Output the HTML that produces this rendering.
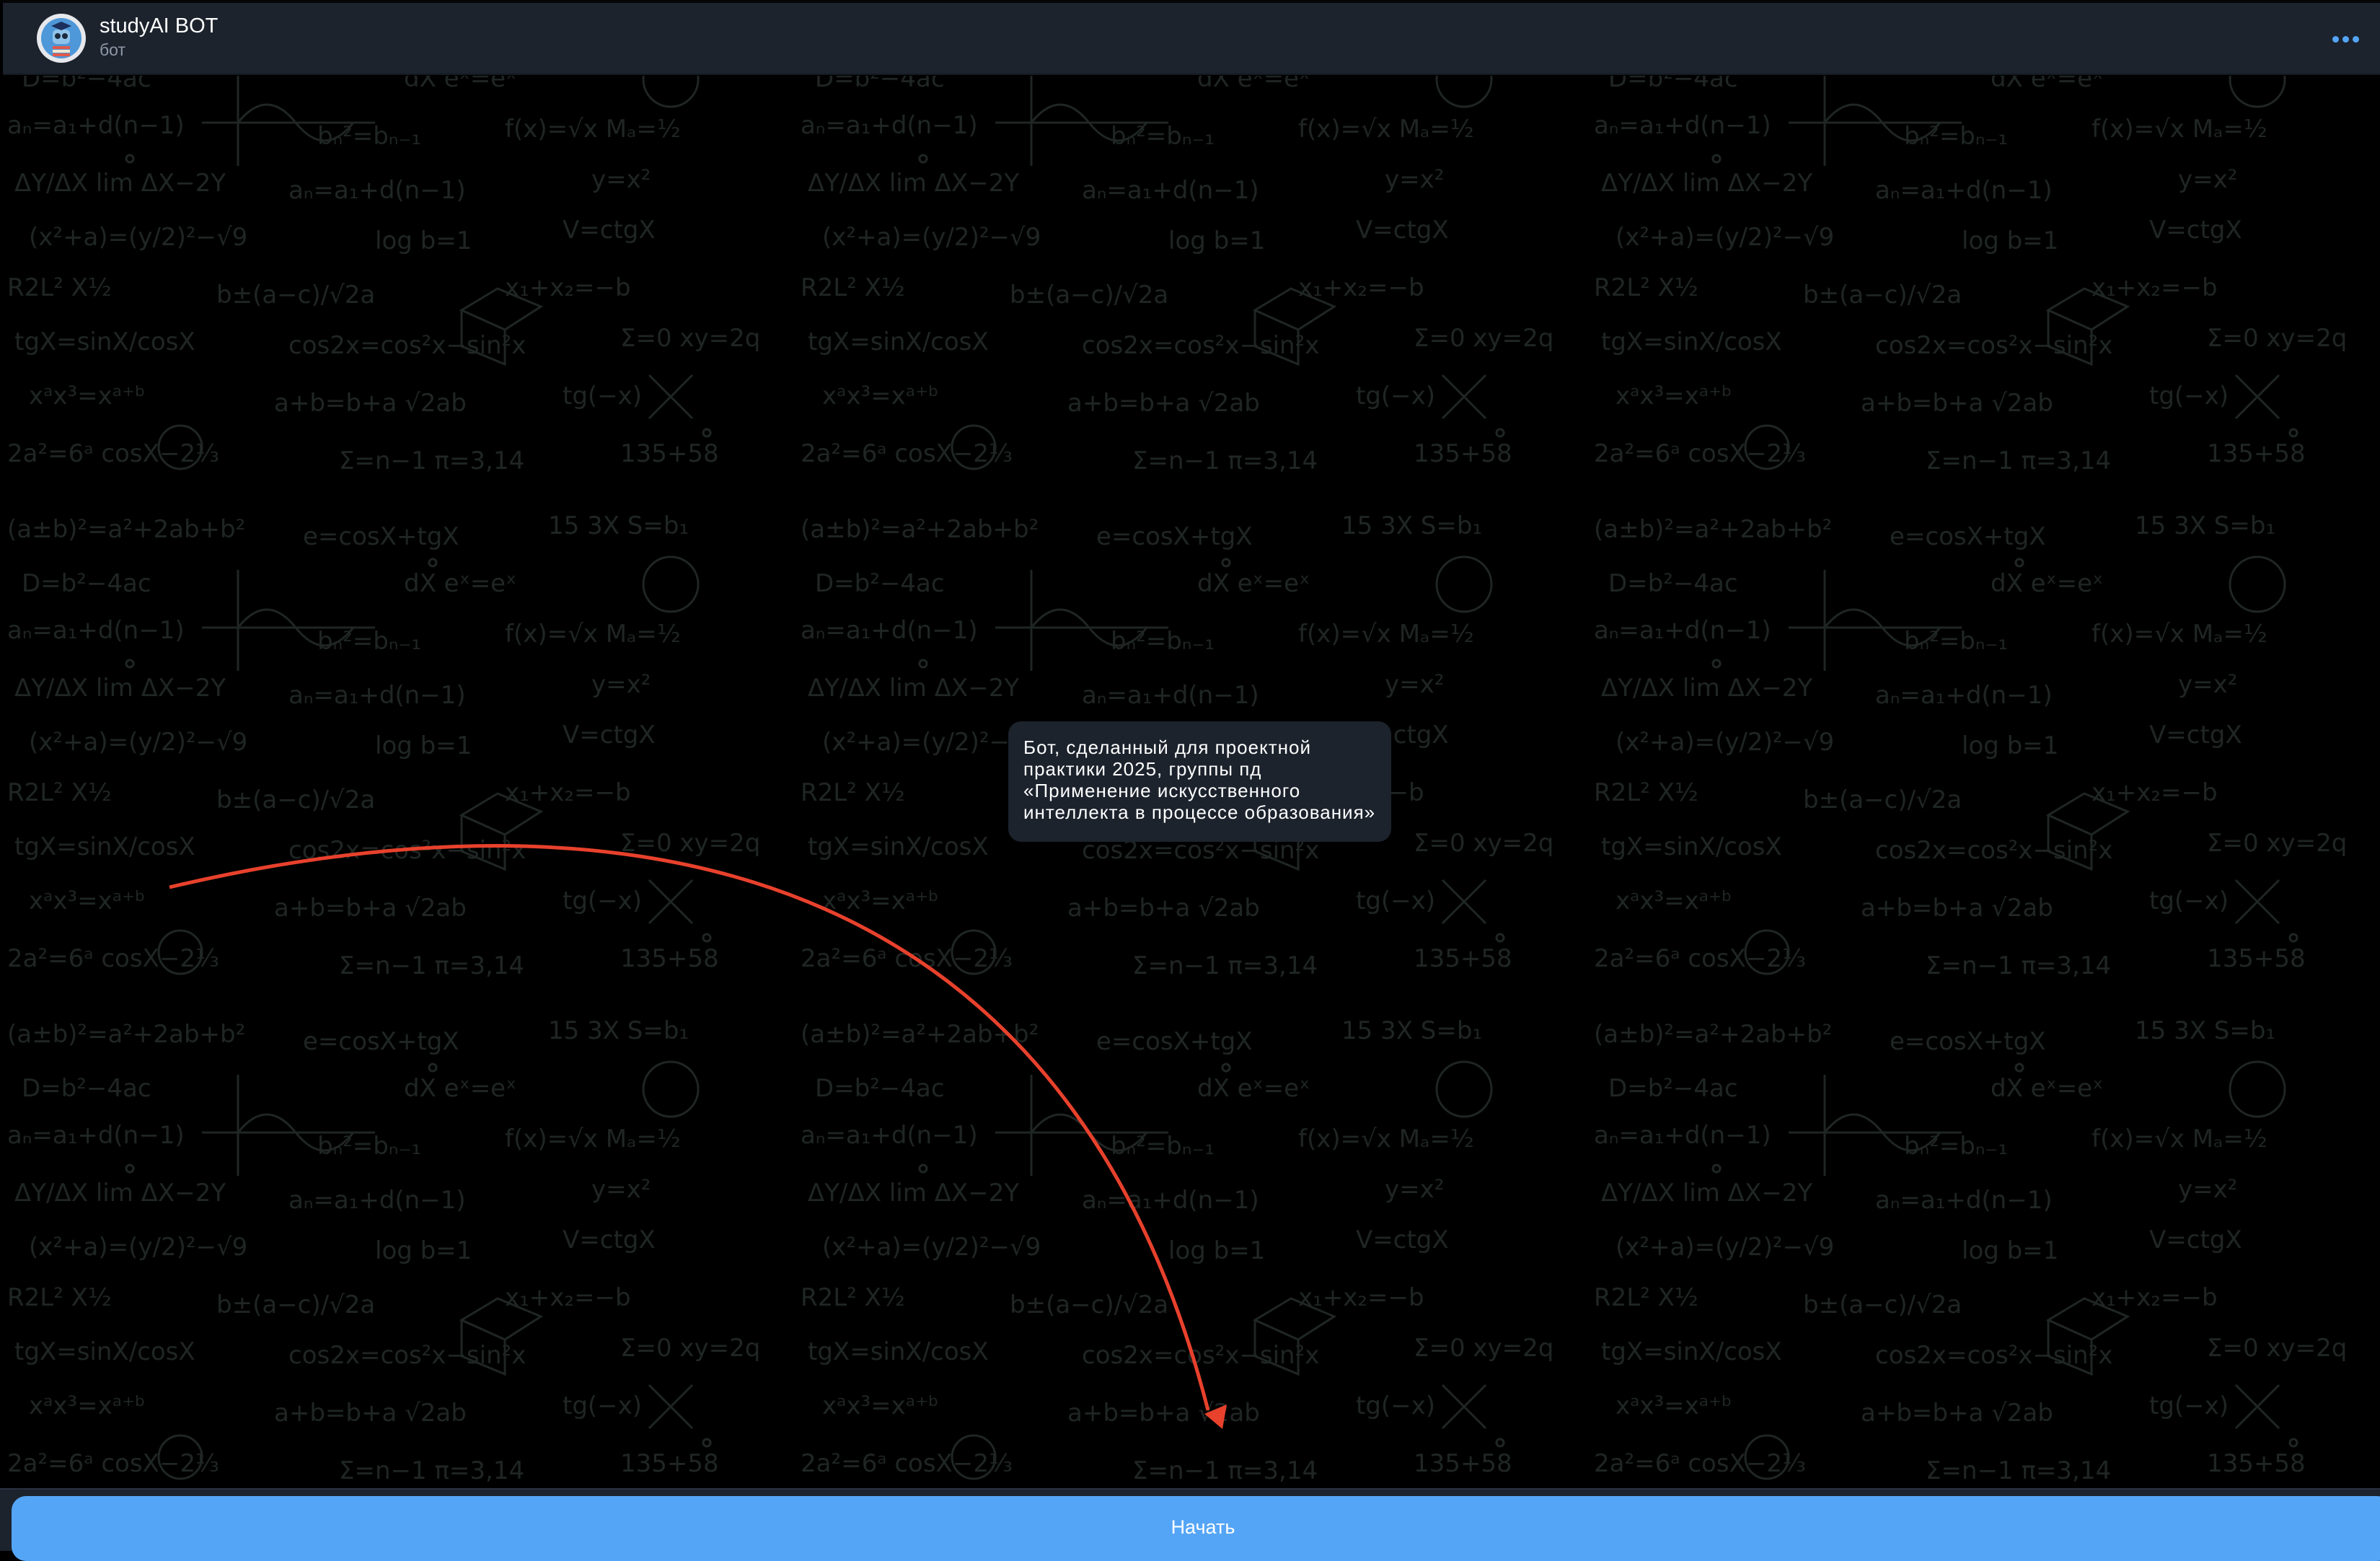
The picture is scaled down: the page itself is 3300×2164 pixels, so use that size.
<!DOCTYPE html>
<html><head><meta charset="utf-8"><style>
html,body{margin:0;padding:0;width:3300px;height:2148px;overflow:hidden;background:#000;font-family:"Liberation Sans","Noto Sans CJK SC",sans-serif;}
.top{position:absolute;left:0;top:0;width:3300px;height:4px;background:#050505}
.hdr{position:absolute;left:4px;top:4px;width:3296px;height:98px;background:#1c232d;border-bottom:2px solid #151a22}
.title{position:absolute;left:138px;top:20px;color:#fff;font-size:29px}
.sub{position:absolute;left:138px;top:56px;color:#8e98a6;font-size:23px}
.bubble{position:absolute;left:1398px;top:1000px;width:531px;height:167px;background:#1c232d;border-radius:18px;box-sizing:border-box;padding:21px 0 0 21px;color:#fff;font-size:26px;letter-spacing:1px;line-height:30px;white-space:nowrap}
.bar{position:absolute;left:0;top:2063px;width:3300px;height:85px;background:#1c232d;border-top:2px solid #2a3240}
.btn{position:absolute;left:16px;top:2074px;width:3300px;height:90px;background:#55a5f6;border-radius:20px;color:#fff;font-size:27px;text-align:center;line-height:86px;box-sizing:border-box;padding-left:4px}
.dot{position:absolute;top:50px;width:9px;height:9px;border-radius:50%;background:#55a5f6}
</style></head><body>
<div class="top"></div>
<svg style="position:absolute;left:0;top:0" width="3300" height="2148">
<defs><pattern id="p" width="1100" height="700" patternUnits="userSpaceOnUse">
<g fill="#1f2624" font-family="DejaVu Sans, sans-serif" font-size="34">
<text x="10" y="45">(a±b)²=a²+2ab+b²</text>
<text x="420" y="55">e=cosX+tgX</text>
<text x="760" y="40">15 3X  S=b₁</text>
<text x="30" y="120">D=b²−4ac</text>
<text x="560" y="120">dX eˣ=eˣ</text>
<text x="10" y="185">aₙ=a₁+d(n−1)</text>
<text x="440" y="200">bₙ²=bₙ₋₁</text>
<text x="700" y="190">f(x)=√x  Mₐ=½</text>
<text x="20" y="265">ΔY/ΔX lim ΔX−2Y</text>
<text x="400" y="275">aₙ=a₁+d(n−1)</text>
<text x="820" y="260">y=x²</text>
<text x="40" y="340">(x²+a)=(y/2)²−√9</text>
<text x="520" y="345">log b=1</text>
<text x="780" y="330">V=ctgX</text>
<text x="10" y="410">R2L²  X½</text>
<text x="300" y="420">b±(a−c)/√2a</text>
<text x="700" y="410">x₁+x₂=−b</text>
<text x="20" y="485">tgX=sinX/cosX</text>
<text x="400" y="490">cos2x=cos²x−sin²x</text>
<text x="860" y="480">Σ=0 xy=2q</text>
<text x="40" y="560">xᵃx³=xᵃ⁺ᵇ</text>
<text x="380" y="570">a+b=b+a  √2ab</text>
<text x="780" y="560">tg(−x)</text>
<text x="10" y="640">2a²=6ᵃ  cosX−2⅓</text>
<text x="470" y="650">Σ=n−1  π=3,14</text>
<text x="860" y="640">135+58</text>
</g>
<g stroke="#1f2624" stroke-width="3" fill="none">
<path d="M330 230 L330 90 M280 170 H520 M330 170 q40 -50 80 0 t80 0"/>
<circle cx="930" cy="110" r="38"/>
<path d="M640 430 l50 -30 l60 25 l-50 32 z M640 430 v50 l60 25 v-48"/>
<circle cx="250" cy="620" r="30"/>
<circle cx="600" cy="80" r="5"/><circle cx="180" cy="220" r="5"/><circle cx="980" cy="600" r="5"/>
<path d="M900 520 l60 60 M960 520 l-60 60"/>
</g>
</pattern></defs>
<rect x="4" y="105" width="3296" height="1958" fill="url(#p)"/>
<path d="M235 1230 C 700 1120, 1450 1080, 1675 1955" stroke="#e8412c" stroke-width="5" fill="none"/>
<polygon points="1670,1960 1701,1947 1695,1981" fill="#e8412c"/>
</svg>
<div class="hdr"></div>
<svg style="position:absolute;left:51px;top:19px" width="68" height="68">
<circle cx="34" cy="34" r="34" fill="#e6e8ec"/>
<circle cx="34" cy="34" r="28" fill="#4e97d8"/>
<rect x="22" y="22" width="24" height="20" rx="6" fill="#8fc3ea"/>
<circle cx="29" cy="31" r="4" fill="#1b2a3a"/><circle cx="39" cy="31" r="4" fill="#1b2a3a"/>
<polygon points="20,17 34,11 48,17 34,23" fill="#1c2f5a"/>
<rect x="22" y="45" width="24" height="4" fill="#e25a4a"/><rect x="22" y="50" width="24" height="4" fill="#f2e6d0"/><rect x="22" y="55" width="24" height="4" fill="#e25a4a"/>
</svg>
<div class="title">studyAI BOT</div>
<div class="sub">бот</div>
<div class="dot" style="left:3234px"></div><div class="dot" style="left:3248px"></div><div class="dot" style="left:3262px"></div>
<div class="bubble">Бот, сделанный для проектной<br>практики 2025, группы пд<br>«Применение искусственного<br>интеллекта в процессе образования»</div>
<div class="bar"></div>
<div class="btn">Начать</div>
</body></html>
